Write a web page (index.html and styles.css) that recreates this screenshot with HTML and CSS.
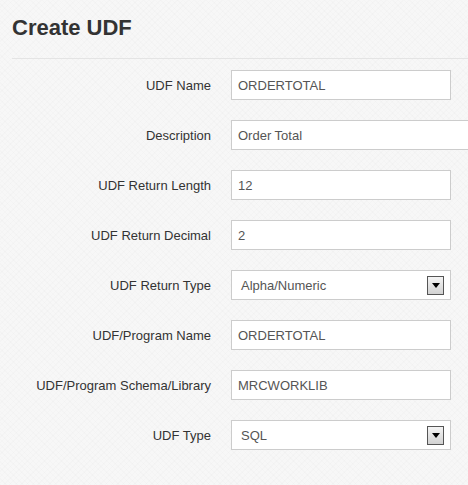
FILE: index.html
```html
<!DOCTYPE html>
<html>
<head>
<meta charset="utf-8">
<link rel="stylesheet" href="styles.css">
</head>
<body>
<div class="page">
  <h1 class="title">Create UDF</h1>
  <hr class="divider">
  <form class="form">
    <label class="label">UDF Name</label>
    <div class="field"><input class="input" type="text" value="ORDERTOTAL"></div>

    <label class="label">Description</label>
    <div class="field"><input class="input input-wide" type="text" value="Order Total"></div>

    <label class="label">UDF Return Length</label>
    <div class="field"><input class="input" type="text" value="12"></div>

    <label class="label">UDF Return Decimal</label>
    <div class="field"><input class="input" type="text" value="2"></div>

    <label class="label">UDF Return Type</label>
    <div class="field">
      <div class="select"><span class="select-text">Alpha/Numeric</span><span class="select-btn"><svg width="8" height="5" viewBox="0 0 8 5"><path d="M0 0H8L4 5Z" fill="#000"/></svg></span></div>
    </div>

    <label class="label">UDF/Program Name</label>
    <div class="field"><input class="input" type="text" value="ORDERTOTAL"></div>

    <label class="label">UDF/Program Schema/Library</label>
    <div class="field"><input class="input" type="text" value="MRCWORKLIB"></div>

    <label class="label">UDF Type</label>
    <div class="field">
      <div class="select"><span class="select-text">SQL</span><span class="select-btn"><svg width="8" height="5" viewBox="0 0 8 5"><path d="M0 0H8L4 5Z" fill="#000"/></svg></span></div>
    </div>
  </form>
</div>
</body>
</html>
```
FILE: styles.css
```css
html, body {
  margin: 0;
  padding: 0;
}
body {
  background-color: #f7f7f7;
  background-image:
    repeating-linear-gradient(45deg, rgba(0,0,0,0.012) 0 1px, transparent 1px 4px),
    repeating-linear-gradient(-45deg, rgba(0,0,0,0.012) 0 1px, transparent 1px 4px);
  font-family: "Liberation Sans", Arial, sans-serif;
  color: #333;
  overflow: hidden;
  width: 468px;
  height: 485px;
}
.page {
  padding: 0 0 0 12px;
}
.title {
  margin: 0;
  padding-top: 15px;
  font-size: 22px;
  line-height: 26px;
  font-weight: bold;
  color: #333;
}
.divider {
  margin: 17px 0 0 0;
  border: 0;
  border-top: 1px solid #e4e4e4;
  height: 0;
}
.form {
  display: grid;
  grid-template-columns: 199px 220px;
  column-gap: 20px;
  row-gap: 20px;
  margin-top: 11px;
  align-items: center;
}
.label {
  text-align: right;
  font-size: 13px;
  color: #333;
}
.field {
  height: 30px;
}
.input {
  box-sizing: border-box;
  width: 220px;
  height: 30px;
  margin: 0;
  padding: 0 6px;
  border: 1px solid #cccccc;
  background: #fff;
  font-family: "Liberation Sans", Arial, sans-serif;
  font-size: 13px;
  color: #555;
  outline: none;
}
.input-wide {
  width: 237px;
  border-right: 0;
}
.select {
  box-sizing: border-box;
  width: 220px;
  height: 30px;
  border: 1px solid #cccccc;
  background: #fff;
  display: flex;
  align-items: center;
  justify-content: space-between;
  padding: 0 6px 0 9px;
  font-size: 13px;
  color: #555;
}
.select-btn {
  box-sizing: border-box;
  width: 17px;
  height: 19px;
  border: 1px solid #555;
  background: linear-gradient(#f4f4f4, #d2d2d2);
  display: flex;
  align-items: center;
  justify-content: center;
}
```
